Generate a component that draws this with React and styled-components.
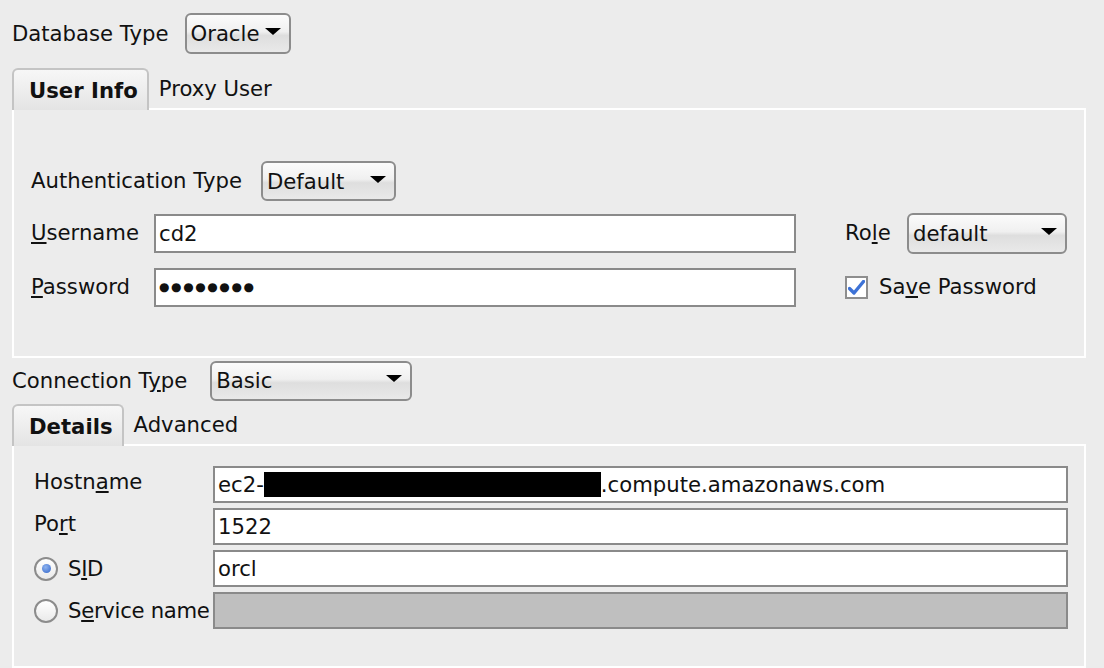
import React from "react";
import styled, { createGlobalStyle } from "styled-components";

const GlobalStyle = createGlobalStyle`
  html, body {
    margin: 0;
    padding: 0;
    background: #ececec;
  }
  body {
    font-family: "DejaVu Sans", "Liberation Sans", sans-serif;
    font-size: 21.2px;
    color: #111;
  }
`;

const Page = styled.div`
  width: 1104px;
  height: 668px;
  overflow: hidden;
  padding: 13px 18px 0 12px;
  box-sizing: border-box;
  display: flex;
  flex-direction: column;
`;

const Row = styled.div`
  display: flex;
  align-items: center;
  gap: ${(p) => p.gap || 14}px;
  height: ${(p) => p.h || 40}px;
  margin-top: ${(p) => p.top || 0}px;
`;

const Label = styled.span`
  white-space: nowrap;
  line-height: 1;
`;

const ComboBox = styled.div`
  box-sizing: border-box;
  width: ${(p) => p.w}px;
  height: ${(p) => p.h || 40}px;
  border: 2px solid #8c8c8c;
  border-radius: 6px;
  background: linear-gradient(#fbfbfb, #f0f0f0 45%, #dedede 55%, #e9e9e9);
  display: flex;
  align-items: center;
  justify-content: space-between;
  padding: 0 8px 0 4px;
`;

const Arrow = styled.span`
  width: 0;
  height: 0;
  border-left: 8px solid transparent;
  border-right: 8px solid transparent;
  border-top: 7px solid #000;
  margin-bottom: 4px;
`;

const TabStrip = styled.div`
  display: flex;
  align-items: flex-end;
  margin-top: ${(p) => p.top || 0}px;
  height: 40px;
`;

const Tab = styled.div`
  box-sizing: border-box;
  height: 40px;
  display: flex;
  align-items: center;
  padding: 0 ${(p) => (p.active ? 9 : 10)}px 0 ${(p) => (p.active ? 15 : 10)}px;
  font-weight: ${(p) => (p.active ? "bold" : "normal")};
  ${(p) =>
    p.active &&
    `
    border: 2px solid #c4c4c4;
    border-bottom: none;
    border-radius: 6px 6px 0 0;
    background: linear-gradient(#f7f7f7, #e4e4e4);
    margin-bottom: -2px;
    height: 42px;
    position: relative;
    z-index: 1;
  `}
`;

const Panel = styled.div`
  box-sizing: border-box;
  width: 1074px;
  border: 2px solid #ffffff;
  ${(p) => p.fill && "flex: 1;"}
  height: ${(p) => (p.fill ? "auto" : `${p.h}px`)};
  padding: ${(p) => p.pad};
`;

const UserGrid = styled.div`
  display: grid;
  grid-template-columns: 123px 642px 49px 62px 160px;
  grid-template-rows: 40px 40px;
  row-gap: 14px;
  align-items: center;
  margin-top: 12px;
`;

const TextField = styled.div`
  box-sizing: border-box;
  height: ${(p) => p.h || 39}px;
  border: 2px solid #8a8a8a;
  background: ${(p) => (p.disabled ? "#bfbfbf" : "#fff")};
  display: flex;
  align-items: center;
  padding-left: 3px;
  white-space: nowrap;
  overflow: hidden;
`;

const Dots = styled.span`
  letter-spacing: 1.6px;
  font-size: 12px;
`;

const CheckRow = styled.div`
  grid-column: 4 / 6;
  display: flex;
  align-items: center;
  gap: 11px;
`;

const CheckBox = styled.div`
  box-sizing: border-box;
  width: 23px;
  height: 23px;
  border: 2px solid #8e8e8e;
  background: #fff;
  display: flex;
  align-items: center;
  justify-content: center;
`;

const DetailGrid = styled.div`
  display: grid;
  grid-template-columns: 179px 855px;
  grid-auto-rows: 37px;
  row-gap: 5px;
  align-items: center;
`;

const RadioLabel = styled.div`
  display: flex;
  align-items: center;
  gap: 10px;
  letter-spacing: -0.3px;
`;

const Radio = styled.span`
  box-sizing: border-box;
  width: 24px;
  height: 24px;
  border-radius: 50%;
  border: 2px solid #8c8c8c;
  background: linear-gradient(#ffffff, #eaeaea);
  display: flex;
  align-items: center;
  justify-content: center;
  &::after {
    content: "";
    width: 9px;
    height: 9px;
    border-radius: 50%;
    background: radial-gradient(circle at 40% 35%, #8fb4f0, #2f63c8);
    display: ${(p) => (p.checked ? "block" : "none")};
  }
`;

const Redacted = styled.span`
  display: inline-block;
  width: 337px;
  height: 25px;
  background: #000;
  vertical-align: middle;
`;

const FieldLabel = styled(Label)`
  margin-top: ${(p) => p.shift || 0}px;
`;

export default function App() {
  return (
    <>
      <GlobalStyle />
      <Page>
        <Row gap={16} h={41}>
          <Label>Database Type</Label>
          <ComboBox w={106} h={41}>
            <span>Oracle</span>
            <Arrow />
          </ComboBox>
        </Row>

        <TabStrip top={14}>
          <Tab active>User Info</Tab>
          <Tab>Proxy User</Tab>
        </TabStrip>
        <Panel h={250} pad="51px 17px 0 17px">
          <Row gap={19} h={40}>
            <Label>Authentication Type</Label>
            <ComboBox w={135} h={40}>
              <span>Default</span>
              <Arrow />
            </ComboBox>
          </Row>
          <UserGrid>
            <Label>
              <u>U</u>sername
            </Label>
            <TextField>cd2</TextField>
            <span />
            <Label>
              Ro<u>l</u>e
            </Label>
            <ComboBox w={160} h={41}>
              <span>default</span>
              <Arrow />
            </ComboBox>
            <Label>
              <u>P</u>assword
            </Label>
            <TextField>
              <Dots>●●●●●●●●</Dots>
            </TextField>
            <span />
            <CheckRow>
              <CheckBox>
                <svg width="17" height="15" viewBox="0 0 17 15">
                  <path
                    d="M1.5 8.5 L6 13 L15.5 1.5"
                    fill="none"
                    stroke="#3d72d6"
                    strokeWidth="3.4"
                    strokeLinecap="round"
                    strokeLinejoin="round"
                  />
                </svg>
              </CheckBox>
              <Label>
                Sa<u>v</u>e Password
              </Label>
            </CheckRow>
          </UserGrid>
        </Panel>

        <Row gap={23} h={41} top={2}>
          <Label>
            Connection T<u>y</u>pe
          </Label>
          <ComboBox w={202}>
            <span>Basic</span>
            <Arrow />
          </ComboBox>
        </Row>

        <TabStrip top={3}>
          <Tab active>Details</Tab>
          <Tab>Advanced</Tab>
        </TabStrip>
        <Panel fill pad="20px 16px 0 20px">
          <DetailGrid>
            <FieldLabel shift={-6}>
              Hostn<u>a</u>me
            </FieldLabel>
            <TextField h={37}>
              ec2-
              <Redacted />
              .compute.amazonaws.com
            </TextField>
            <FieldLabel shift={-6}>
              Po<u>r</u>t
            </FieldLabel>
            <TextField h={37}>1522</TextField>
            <RadioLabel>
              <Radio checked />
              <Label>
                S<u>I</u>D
              </Label>
            </RadioLabel>
            <TextField h={37}>orcl</TextField>
            <RadioLabel>
              <Radio />
              <Label>
                S<u>e</u>rvice name
              </Label>
            </RadioLabel>
            <TextField h={37} disabled />
          </DetailGrid>
        </Panel>
      </Page>
    </>
  );
}
